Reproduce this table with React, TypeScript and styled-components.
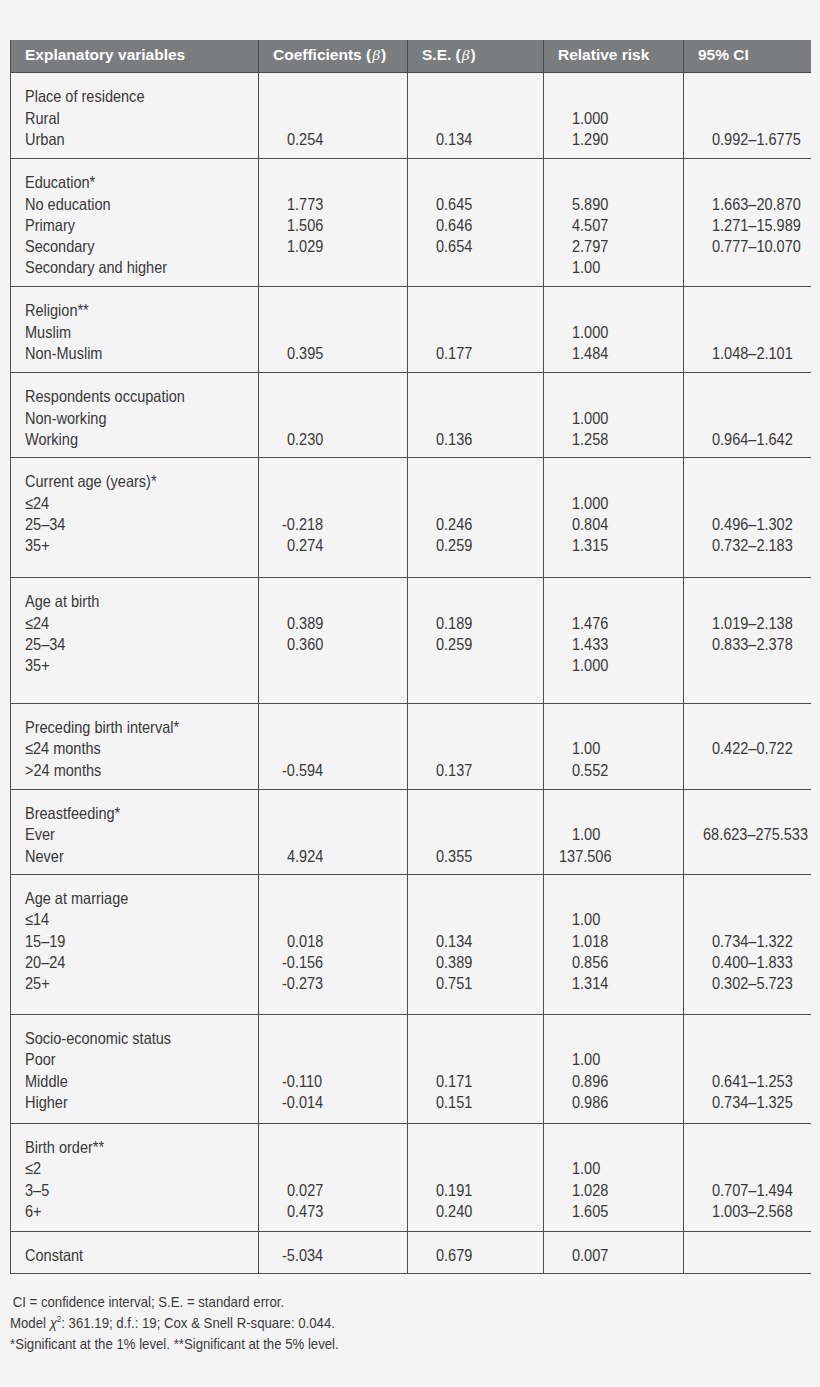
import React from "react";
import styled, { createGlobalStyle } from "styled-components";

const Global = createGlobalStyle`
  html, body { margin: 0; padding: 0; background: #f4f4f4; }
  body { font-family: "Liberation Sans", Arial, sans-serif; color: #333; }
`;

const Page = styled.div`
  width: 820px;
  min-height: 1387px;
  box-sizing: border-box;
  padding: 40px 10px 0 10px;
`;

const Table = styled.div`
  width: 800px;
  border-left: 1px solid #4e4e4e;
`;

const COLS = "248px 149px 136px 140px 126px";

const HeadRow = styled.div`
  display: grid;
  grid-template-columns: ${COLS};
  height: 33px;
  background: #7b7c7e;
  border-bottom: 1px solid #4a4a4a;
  box-sizing: border-box;
`;

const HeadCell = styled.div<{ $last?: boolean }>`
  box-sizing: border-box;
  padding: 0 0 2px 14px;
  display: flex;
  align-items: center;
  color: #fff;
  font-weight: bold;
  font-size: 15.5px;
  white-space: nowrap;
  border-right: ${(p) => (p.$last ? "none" : "1px solid #4a4a4a")};
`;

const Beta = styled.i`
  font-family: "Liberation Serif", serif;
  font-weight: normal;
  font-style: italic;
  margin: 0 1px;
`;

const Row = styled.div<{ $extra: number }>`
  display: grid;
  grid-template-columns: ${COLS};
  border-bottom: 1px solid #4e4e4e;
  & > div {
    padding-bottom: ${(p) => 7.8 + p.$extra}px;
  }
`;

const Cell = styled.div<{ $label?: boolean; $last?: boolean }>`
  box-sizing: border-box;
  padding-top: 13.3px;
  padding-left: ${(p) => (p.$label ? 14 : 28)}px;
  border-right: ${(p) => (p.$last ? "none" : "1px solid #4e4e4e")};
  font-size: 16.5px;
  color: #383838;
`;

const Line = styled.div`
  height: 21.3px;
  line-height: 21.3px;
  white-space: nowrap;
  transform: scaleX(0.88);
  transform-origin: 0 50%;
`;

const Footer = styled.div`
  margin-top: 17px;
  font-size: 15px;
  line-height: 21px;
  color: #3a3a3a;
`;

const FootLine = styled.div<{ $indent?: number }>`
  padding-left: ${(p) => p.$indent ?? 0}px;
  white-space: nowrap;
  transform: scaleX(0.88);
  transform-origin: 0 50%;
`;

const Chi = styled.i`
  font-style: italic;
`;

const Sup = styled.sup`
  font-size: 9px;
  vertical-align: 6px;
  line-height: 0;
`;

type Group = {
  labels: string[];
  coef: string[];
  se: string[];
  rr: string[];
  ci: string[];
  extra: number;
};

const groups: Group[] = [
  {
    labels: ["Place of residence", "Rural", "Urban"],
    coef: ["", "", "0.254"],
    se: ["", "", "0.134"],
    rr: ["", "1.000", "1.290"],
    ci: ["", "", "0.992–1.6775"],
    extra: 0,
  },
  {
    labels: ["Education*", "No education", "Primary", "Secondary", "Secondary and higher"],
    coef: ["", "1.773", "1.506", "1.029"],
    se: ["", "0.645", "0.646", "0.654"],
    rr: ["", "5.890", "4.507", "2.797", "1.00"],
    ci: ["", "1.663–20.870", "1.271–15.989", "0.777–10.070"],
    extra: -0.6,
  },
  {
    labels: ["Religion**", "Muslim", "Non-Muslim"],
    coef: ["", "", "0.395"],
    se: ["", "", "0.177"],
    rr: ["", "1.000", "1.484"],
    ci: ["", "", "1.048–2.101"],
    extra: 0,
  },
  {
    labels: ["Respondents occupation", "Non-working", "Working"],
    coef: ["", "", "0.230"],
    se: ["", "", "0.136"],
    rr: ["", "1.000", "1.258"],
    ci: ["", "", "0.964–1.642"],
    extra: -1,
  },
  {
    labels: ["Current age (years)*", "≤24", "25–34", "35+"],
    coef: ["", "", "-0.218", "0.274"],
    se: ["", "", "0.246", "0.259"],
    rr: ["", "1.000", "0.804", "1.315"],
    ci: ["", "", "0.496–1.302", "0.732–2.183"],
    extra: 12.7,
  },
  {
    labels: ["Age at birth", "≤24", "25–34", "35+"],
    coef: ["", "0.389", "0.360"],
    se: ["", "0.189", "0.259"],
    rr: ["", "1.476", "1.433", "1.000"],
    ci: ["", "1.019–2.138", "0.833–2.378"],
    extra: 18.7,
  },
  {
    labels: ["Preceding birth interval*", "≤24 months", ">24 months"],
    coef: ["", "", "-0.594"],
    se: ["", "", "0.137"],
    rr: ["", "1.00", "0.552"],
    ci: ["", "0.422–0.722"],
    extra: 0,
  },
  {
    labels: ["Breastfeeding*", "Ever", "Never"],
    coef: ["", "", "4.924"],
    se: ["", "", "0.355"],
    rr: ["", "1.00", "137.506"],
    ci: ["", "68.623–275.533"],
    extra: -1,
  },
  {
    labels: ["Age at marriage", "≤14", "15–19", "20–24", "25+"],
    coef: ["", "", "0.018", "-0.156", "-0.273"],
    se: ["", "", "0.134", "0.389", "0.751"],
    rr: ["", "1.00", "1.018", "0.856", "1.314"],
    ci: ["", "", "0.734–1.322", "0.400–1.833", "0.302–5.723"],
    extra: 11.4,
  },
  {
    labels: ["Socio-economic status", "Poor", "Middle", "Higher"],
    coef: ["", "", "-0.110", "-0.014"],
    se: ["", "", "0.171", "0.151"],
    rr: ["", "1.00", "0.896", "0.986"],
    ci: ["", "", "0.641–1.253", "0.734–1.325"],
    extra: 1.7,
  },
  {
    labels: ["Birth order**", "≤2", "3–5", "6+"],
    coef: ["", "", "0.027", "0.473"],
    se: ["", "", "0.191", "0.240"],
    rr: ["", "1.00", "1.028", "1.605"],
    ci: ["", "", "0.707–1.494", "1.003–2.568"],
    extra: 0.7,
  },
  {
    labels: ["Constant"],
    coef: ["-5.034"],
    se: ["0.679"],
    rr: ["0.007"],
    ci: [""],
    extra: -1.4,
  },
];

// values that start left of the column's alignment line (minus sign, extra integer digits)
function hang(v: string): number {
  if (!v) return 0;
  let h = 0;
  if (v.startsWith("-")) h += 5;
  const first = v.replace(/^-/, "").split(/[–.]/)[0];
  if (first.length === 2) h += 9;
  if (first.length === 3) h += 13;
  return h;
}

function Values({ values, last }: { values: string[]; last?: boolean }) {
  return (
    <Cell $last={last}>
      {values.map((v, i) => (
        <Line key={i} style={hang(v) ? { marginLeft: -hang(v) } : undefined}>
          {v || "\u00a0"}
        </Line>
      ))}
    </Cell>
  );
}

export default function App() {
  return (
    <Page>
      <Global />
      <Table>
        <HeadRow>
          <HeadCell>Explanatory variables</HeadCell>
          <HeadCell>
            Coefficients (<Beta>β</Beta>)
          </HeadCell>
          <HeadCell>
            S.E. (<Beta>β</Beta>)
          </HeadCell>
          <HeadCell>Relative risk</HeadCell>
          <HeadCell $last>95% CI</HeadCell>
        </HeadRow>
        {groups.map((g, i) => (
          <Row key={i} $extra={g.extra}>
            <Cell $label>
              {g.labels.map((l, j) => (
                <Line key={j}>{l}</Line>
              ))}
            </Cell>
            <Values values={g.coef} />
            <Values values={g.se} />
            <Values values={g.rr} />
            <Values values={g.ci} last />
          </Row>
        ))}
      </Table>
      <Footer>
        <FootLine $indent={3}>CI = confidence interval; S.E. = standard error.</FootLine>
        <FootLine>
          Model <Chi>χ</Chi>
          <Sup>2</Sup>: 361.19; d.f.: 19; Cox &amp; Snell R-square: 0.044.
        </FootLine>
        <FootLine>*Significant at the 1% level. **Significant at the 5% level.</FootLine>
      </Footer>
    </Page>
  );
}
